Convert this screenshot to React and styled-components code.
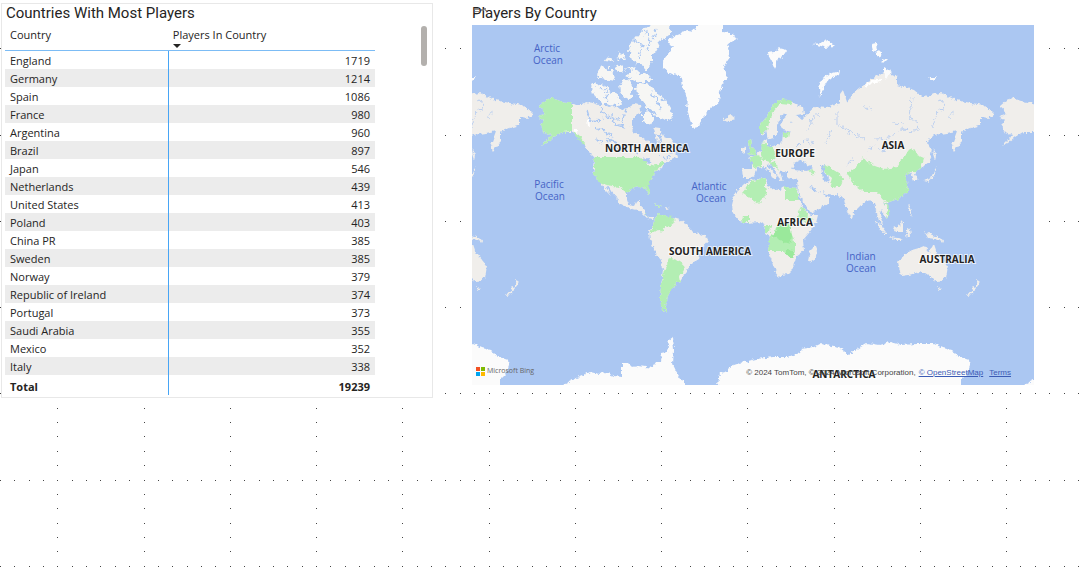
import React from "react";
import styled, { createGlobalStyle } from "styled-components";

const Global = createGlobalStyle`
  * { box-sizing: border-box; }
  body { margin: 0; background: #fff; color: #252423; font-family: "Open Sans", "Noto Sans", sans-serif; }
`;

const Page = styled.main`
  position: relative;
  min-height: 100vh;
  overflow: hidden;
  display: grid;
  grid-template-columns: minmax(0, 432fr) minmax(0, 562fr);
  align-items: start;
  gap: 39px;
  padding: 3px 49px 0 1px;
`;
const Dots = styled.svg`
  position: absolute;
  inset: 0;
  width: 100%;
  height: 100%;
`;
const Panel = styled.section`
  position: relative;
  background: #fff;
`;
const TablePanel = styled(Panel)`
  border: 1px solid #e8e8e8;
  padding: 0 5px 2px 3px;
`;
const MapPanel = styled(Panel)`
  box-shadow: 0 0 0 4px #fff;
`;
const Title = styled.h2`
  margin: 0;
  padding-left: ${(p) => (p.$inset ? "1px" : "0")};
  padding-bottom: 2px;
  font: 400 15px/${(p) => (p.$inset ? "18px" : "20px")} Roboto, sans-serif;
  color: #252423;
  white-space: nowrap;
`;
const TitleMark = styled.svg`
  position: absolute;
  top: 4px;
  left: 1px;
`;
const Body = styled.div`
  display: flex;
  align-items: flex-start;
`;
const Table = styled.table`
  flex: 1;
  margin: 0 46px 0 0;
  border-collapse: separate;
  border-spacing: 0;
  table-layout: fixed;
  font-size: 11px;
  line-height: 18px;
`;
const HeadCell = styled.th`
  width: ${(p) => p.$width};
  height: 27px;
  padding: 2px 5px 0;
  border-bottom: 1px solid #7cbcf5;
  text-align: left;
  vertical-align: top;
  font-weight: 400;
`;
const SortButton = styled.button`
  display: block;
  padding: 0;
  border: 0;
  background: none;
  color: inherit;
  font: inherit;
  text-align: left;
  white-space: nowrap;
`;
const SortMark = styled.svg`
  display: block;
  width: 8px;
  height: 4px;
`;
const Row = styled.tr`
  background: ${(p) => (p.$shade ? "#ececec" : "#fff")};
`;
const Cell = styled.td`
  height: 18px;
  padding: 1px 5px 0;
  line-height: 17px;
  text-align: ${(p) => (p.$num ? "right" : "left")};
  border-left: ${(p) => (p.$num ? "1px solid #47a5f5" : "0")};
`;
const TotalCell = styled(Cell)`
  font-weight: 700;
  height: 20px;
  padding-top: 2px;
`;
const Thumb = styled.div`
  width: 6px;
  height: 40px;
  margin-top: 2px;
  border-radius: 3px;
  background: #b3b0ad;
`;
const MapBox = styled.div`
  position: relative;
`;
const MapSvg = styled.svg`
  display: block;
  width: 100%;
  height: auto;
  background: #abc7f2;
`;
const Ocean = styled.text`
  font: 400 10px "Open Sans", sans-serif;
  fill: #4563c6;
  text-anchor: middle;
`;
const Continent = styled.text`
  font: 700 10px "Open Sans", sans-serif;
  fill: #222;
  stroke: #fff;
  stroke-opacity: 0.7;
  stroke-width: 2px;
  paint-order: stroke;
  text-anchor: middle;
`;
const Footer = styled.footer`
  position: absolute;
  left: 4px;
  right: 23px;
  bottom: 4px;
  display: flex;
  align-items: center;
  gap: 3px;
  font: 8px/12px "Liberation Sans", sans-serif;
  color: #444;
  white-space: nowrap;
`;
const Brand = styled.span`
  display: flex;
  align-items: center;
  gap: 2px;
  margin-right: auto;
  padding-bottom: 4px;
  font: 7px/12px "Open Sans", sans-serif;
  color: #666;
`;
const FootLink = styled.a`
  color: #3b5bb5;
  margin-right: ${(p) => (p.$gap ? "3px" : "0")};
`;

const rows = [
  ["England", 1719], ["Germany", 1214], ["Spain", 1086], ["France", 980],
  ["Argentina", 960], ["Brazil", 897], ["Japan", 546], ["Netherlands", 439],
  ["United States", 413], ["Poland", 403], ["China PR", 385], ["Sweden", 385],
  ["Norway", 379], ["Republic of Ireland", 374], ["Portugal", 373],
  ["Saudi Arabia", 355], ["Mexico", 352], ["Italy", 338],
];

// Canvas grid: a dot every sixth of an 86.25px cell along both axes.
const STEP = 14.375;
const dotPath = (() => {
  let d = "";
  for (let j = -3; j < 110; j++) {
    for (let i = 0; i < 180; i++) {
      if (j % 6 === 0 || i % 6 === 4) {
        d += `M${Math.round(i * STEP - 0.2)} ${Math.round(48.3 + j * STEP)}h1v1h-1z`;
      }
    }
  }
  return d;
})();

const land = [
  // North and Central America
  "M539 106L546 100 552 98 560 101 572 103 576 105 582 105 586 102 593 103 599 105 605 105 609 107 616 106 620 109 628 108 634 104 640 105 641 111 636 116 632 119 632 125 634 132 640 136 645 140 652 143 655 150 657 143 656 136 653 127 660 128 665 138 670 137 676 145 678 148 669 154 676 152 678 157 669 161 664 163 662 168 655 172 652 178 648 182 648 187 650 192 648 194 645 188 640 187 635 188 629 190 627 193 627 200 629 205 634 206 636 202 640 201 640 206 645 210 645 214 649 217 654 217 653 219 647 218 642 213 637 210 629 208 619 203 617 198 611 191 608 186 606 187 611 196 606 191 602 185 597 179 593 170 594 157 588 151 583 142 578 136 573 132 562 132 554 137 547 143 541 146 549 138 551 135 542 131 540 125 545 120 539 117 546 112Z",
  // South America
  "M655 217L658 214 665 216 673 218 680 220 687 225 693 232 700 234 707 237 708 241 703 247 700 253 698 260 690 265 688 270 685 273 680 282 676 283 675 287 670 291 667 300 665 305 667 312 662 309 660 300 661 287 663 270 662 260 655 252 650 240 649 232 653 225Z",
  // Europe and Asia
  "M760 132L760 125 768 115 773 105 783 99 792 102 803 108 804 114 796 115 801 119 808 115 813 107 827 108 834 105 840 103 840 94 843 90 847 102 854 93 864 85 874 78 884 72 897 77 897 85 914 90 920 95 927 97 934 94 941 93 956 100 971 103 984 105 994 114 989 118 981 117 981 125 971 128 961 132 961 142 954 152 952 145 957 131 947 133 934 135 927 142 932 150 929 162 921 168 914 172 918 180 914 180 911 173 904 175 907 182 908 192 901 198 889 202 884 203 891 212 886 218 881 210 880 215 884 225 879 221 874 203 867 200 861 205 854 212 852 219 847 210 844 199 836 195 828 194 817 191 809 185 813 191 820 192 829 197 829 203 811 213 804 203 798 192 797 180 787 178 787 171 780 172 783 181 779 178 772 164 766 165 777 175 774 180 771 173 765 167 758 168 754 176 750 178 743 178 742 168 752 168 752 162 748 158 755 155 761 150 763 142 767 139 767 147 777 145 782 142 783 133 792 132 783 130 780 125 787 115 783 113 777 125 777 132 773 138 768 140 766 130 763 135Z",
  // Africa
  "M743 185L752 180 765 178 768 187 777 190 785 187 797 188 799 200 804 209 811 215 818 215 816 223 809 233 803 240 804 251 796 257 794 267 787 274 777 276 773 263 768 252 770 237 764 230 765 225 760 222 747 223 740 221 733 213 732 205 735 193Z",
  "M810 251L815 246 817 251 813 262 808 260Z",
  "M747 154L751 152 749 147 748 141 751 139 752 146 756 151 754 155Z",
  "M741 149L746 146 746 152 741 153Z",
  "M725 118L731 115 735 118 729 122 724 121Z",
  // Oceania and south-east Asia
  "M898 262L901 258 912 250 919 248 924 246 929 252 931 248 934 244 937 253 943 260 948 266 946 278 939 282 934 280 929 275 919 272 909 275 901 276Z",
  "M924 231L930 234 940 238 944 243 935 239 928 238Z",
  "M893 228L900 225 903 221 903 232 896 232Z",
  "M875 221L880 224 888 235 885 235Z",
  "M888 237L899 238 904 240 896 240Z",
  "M907 204L910 207 912 217 909 211Z",
  "M906 233L909 227 911 233 907 238Z",
  "M967 295L974 287 976 288 969 296Z",
  "M976 280L980 283 976 288Z",
  "M937 287L942 288 939 290Z",
  "M924 181L931 178 934 171 937 166 934 177 928 182Z",
  "M934 148L936 155 935 160 933 154Z",
  "M654 203L661 206 658 207ZM665 207L670 208 666 210Z",
];

const ice = [
  "M662 62L673 47 668 44 670 38 680 34 687 30 694 31 697 26 701 20 723 20 723 32 729 33 737 38 729 43 728 48 730 57 724 66 727 77 722 84 720 92 719 104 710 108 707 113 702 118 699 127 693 128 690 120 687 108 688 98 683 88 682 78 677 75 669 73 663 68Z",
  "M767 53L774 52 779 48 787 50 783 56 778 58 775 69 772 62Z",
  "M820 97L819 87 821 80 829 74 840 71 839 75 828 80 824 87Z",
  "M872 44L876 43 877 50 874 52ZM877 51L881 52 880 57 876 55ZM882 58L887 59 883 63Z",
  "M928 77L937 77 933 81ZM884 67L891 71 887 80 884 76ZM813 44L821 43 828 40 835 46 825 47Z",
  "M555 397L562 385 572 380 582 376 590 372 599 374 605 372 614 376 622 377 622 363 628 363 632 367 639 366 652 368 656 362 661 362 662 353 667 352 669 340 673 337 674 350 673 362 675 370 685 385 690 397Z",
  "M716 397L718 385 720 373 728 371 731 366 740 363 756 359 773 357 787 357 800 353 802 349 814 347 822 343 830 346 840 348 849 355 858 348 867 343 880 345 890 342 901 345 917 344 934 344 943 348 951 350 960 357 969 360 970 366 967 374 961 380 961 397Z",
];

const arctic = [
  "M630 44L636 38 643 30 652 24 668 24 673 30 668 36 660 42 656 50 652 56 652 64 645 69 639 64 632 60 629 52Z",
  "M592 86L597 83 605 86 612 91 618 95 622 103 616 106 604 104 595 97Z",
  "M597 73L602 67 610 70 617 76 616 81 608 80 600 79Z",
  "M614 67L621 64 626 69 621 74Z",
  "M625 76L633 70 640 73 651 77 650 82 638 82Z",
  "M619 83L627 78 633 86 632 96 625 99 620 92Z",
  "M636 87L641 83 649 86 656 91 660 97 666 102 671 110 673 117 668 122 661 119 655 113 648 108 643 101 637 96Z",
  "M643 113L651 112 654 119 650 125 643 122Z",
  "M605 61L609 56 613 62ZM616 58L621 52 626 60ZM607 66L611 65 609 69ZM628 67L636 66 634 71Z",
];

const green = [
  "M539 106L546 100 552 98 560 101 572 103 572 131 562 132 554 137 547 143 541 146 549 138 551 135 542 131 540 125 545 120 539 117 546 112Z",
  "M573 131L579 135 585 143 585 145 579 140Z",
  "M594 157L637 157 645 160 649 166 656 165 664 161 664 164 655 172 652 178 648 182 650 192 648 194 645 188 640 187 635 188 629 190 627 193 619 187 606 185 599 183 594 173Z",
  "M655 217L658 214 665 216 673 217 675 222 670 226 665 227 662 232 657 230 650 234 653 225Z",
  "M670 258L677 260 683 264 684 270 679 277 680 282 676 283 675 287 670 291 667 300 665 305 667 312 662 309 660 300 661 287 664 270Z",
  "M742 193L752 181 765 178 765 188 767 195 758 204Z",
  "M785 187L797 188 796 191 799 200 785 200Z",
  "M801 206L806 211 808 216 813 219 804 222 797 218Z",
  "M777 224L790 224 792 236 795 242 795 250 793 258 786 255 783 251 768 251 770 236 774 234Z",
  "M743 216L749 216 749 222 742 222ZM765 226L771 226 770 232 765 232Z",
  "M847 173L856 167 861 161 864 157 869 163 884 169 897 167 901 160 904 158 908 151 912 147 917 155 924 158 921 168 914 172 904 175 907 182 908 192 901 198 889 202 884 200 877 192 864 192 854 185Z",
  "M760 134L760 125 768 115 773 105 783 99 792 101 791 105 780 104 774 111 769 122 767 131Z",
  "M750 159L756 154 762 158 762 167 754 168Z",
  "M761 149L763 142 766 146 773 147 776 157 770 162 763 160 761 155Z",
  "M747 154L751 152 749 147 748 141 751 139 752 146 756 151 754 155Z",
  "M768 162L776 163 779 171 775 167ZM783 133L789 133 788 138 783 137ZM809 170L815 171 813 175Z",
  "M825 164L832 169 840 174 841 180 835 188 830 185 832 178 824 171Z",
  "M832 178L844 177 840 187 832 187Z",
  "M884 202L888 205 891 212 886 218 888 210Z",
  "M654 203L661 206 658 207ZM645 214L649 217 645 215Z",
];

const waters = [
  "M792 170L794 163 800 160 805 163 813 168 808 171Z",
  "M821 166L826 165 824 171 829 177 828 183 823 181 822 174Z",
  "M641 160L648 157 652 164 645 163Z",
];

const channels =
  "M602 88L608 93 606 101M587 110L590 120 601 121M601 108L606 117 618 119M613 113L614 124 626 128M596 128L605 132 612 136M607 139L614 141 619 150M626 108L622 123M634 38L643 47 639 58M645 31L650 42 646 51M656 29L653 40M650 93L656 99 661 109M664 128L658 137 663 149M595 137L601 143M632 148L639 154M671 158L661 157";
const rivers =
  "M837 112L837 124 850 132 863 138M874 139L889 138 899 130 917 131 918 123 910 118 912 97M892 123L904 124M933 127L937 112 944 107 941 99M948 120L955 110M864 107L872 110M868 151L875 146M847 164L853 160M879 150L890 148M808 131L812 120 821 112M798 145L804 139 815 144M825 143L832 130M790 123L794 121";

function Shapes({ items, fill }) {
  return items.map((d) => <path key={d} d={d} fill={fill} />);
}

function WorldMap() {
  return (
    <MapSvg viewBox="472 25 562 360" role="img" aria-label="Players by country map">
      <defs>
        <filter id="coast" x="-5%" y="-5%" width="110%" height="110%">
          <feTurbulence type="fractalNoise" baseFrequency="0.28" numOctaves="3" seed="4" />
          <feDisplacementMap in="SourceGraphic" scale="5" xChannelSelector="R" yChannelSelector="G" />
        </filter>
        <filter id="fjord" x="-5%" y="-5%" width="110%" height="110%">
          <feTurbulence type="fractalNoise" baseFrequency="0.22" numOctaves="3" seed="9" />
          <feDisplacementMap in="SourceGraphic" scale="9" xChannelSelector="R" yChannelSelector="G" />
        </filter>
        <g id="world">
          <g filter="url(#coast)">
            <Shapes items={land} fill="#f0eeeb" />
            <Shapes items={waters} fill="#abc7f2" />
            <Shapes items={ice} fill="#fbfbfb" />
            <path d="M865 86l10-5 7-1M588 120l1 6M573 130l4 2" stroke="#fff" strokeWidth="2" fill="none" />
          </g>
          <g filter="url(#fjord)">
            <Shapes items={arctic} fill="#f6f6f4" />
            <path d={channels} stroke="#abc7f2" strokeWidth="1.5" fill="none" />
            <path d={rivers} stroke="#b8cdef" strokeWidth="0.9" fill="none" />
          </g>
        </g>
      </defs>
      <use href="#world" />
      <use href="#world" x="-461" />
      <use href="#world" x="461" />
      <g filter="url(#coast)">
        <Shapes items={green} fill="#b3eeb3" />
        <path d="M777 224L790 224 792 236 790 244 783 242 777 238 772 236 776 231ZM786 249L794 250 793 258 786 255Z" fill="#9ae99b" />
      </g>
      <Ocean x="547" y="52">Arctic</Ocean>
      <Ocean x="548" y="64">Ocean</Ocean>
      <Ocean x="549" y="188">Pacific</Ocean>
      <Ocean x="550" y="200">Ocean</Ocean>
      <Ocean x="709" y="190">Atlantic</Ocean>
      <Ocean x="711" y="202">Ocean</Ocean>
      <Ocean x="861" y="260">Indian</Ocean>
      <Ocean x="861" y="272">Ocean</Ocean>
      <Continent x="647" y="152">NORTH AMERICA</Continent>
      <Continent x="710" y="255">SOUTH AMERICA</Continent>
      <Continent x="795" y="157">EUROPE</Continent>
      <Continent x="795" y="226">AFRICA</Continent>
      <Continent x="893" y="149">ASIA</Continent>
      <Continent x="947" y="263">AUSTRALIA</Continent>
      <Continent x="844" y="378">ANTARCTICA</Continent>
    </MapSvg>
  );
}

export default function App() {
  return (
    <>
      <Global />
      <Page>
        <Dots aria-hidden="true"><path d={dotPath} fill="#444" /></Dots>
        <TablePanel>
          <Title $inset>Countries With Most Players</Title>
          <Body>
            <Table>
              <thead>
                <tr>
                  <HeadCell $width="44%" scope="col"><SortButton>Country</SortButton></HeadCell>
                  <HeadCell scope="col" aria-sort="descending">
                    <SortButton>
                      Players In Country
                      <SortMark viewBox="0 0 8 4" aria-hidden="true"><path d="M0 0h8l-4 4z" fill="#252423" /></SortMark>
                    </SortButton>
                  </HeadCell>
                </tr>
              </thead>
              <tbody>
                {rows.map(([country, players], i) => (
                  <Row key={country} $shade={i % 2 === 1}>
                    <Cell>{country}</Cell>
                    <Cell $num>{players}</Cell>
                  </Row>
                ))}
              </tbody>
              <tfoot>
                <Row>
                  <TotalCell>Total</TotalCell>
                  <TotalCell $num>19239</TotalCell>
                </Row>
              </tfoot>
            </Table>
            <Thumb />
          </Body>
        </TablePanel>
        <MapPanel>
          <Title>Players By Country</Title>
          <TitleMark width="16" height="8" viewBox="0 0 16 8" aria-hidden="true">
            <path d="M1 1h5v2H1zM2 4h4v1H2zM8 2h3v2H8zM11 1h2v2h-2zM12 3h2v1h-2z" fill="#777" opacity="0.8" />
          </TitleMark>
          <MapBox>
            <WorldMap />
            <Footer>
              <Brand>
                <svg width="9" height="9" viewBox="0 0 9 9" aria-hidden="true">
                  <path d="M0 0h4v4H0z" fill="#f25022" />
                  <path d="M5 0h4v4H5z" fill="#7fba00" />
                  <path d="M0 5h4v4H0z" fill="#00a4ef" />
                  <path d="M5 5h4v4H5z" fill="#ffb900" />
                </svg>
                Microsoft Bing
              </Brand>
              <span>© 2024 TomTom, © 2024 Microsoft Corporation,</span>
              <FootLink href="#osm" $gap>© OpenStreetMap</FootLink>
              <FootLink href="#terms">Terms</FootLink>
            </Footer>
          </MapBox>
        </MapPanel>
      </Page>
    </>
  );
}
